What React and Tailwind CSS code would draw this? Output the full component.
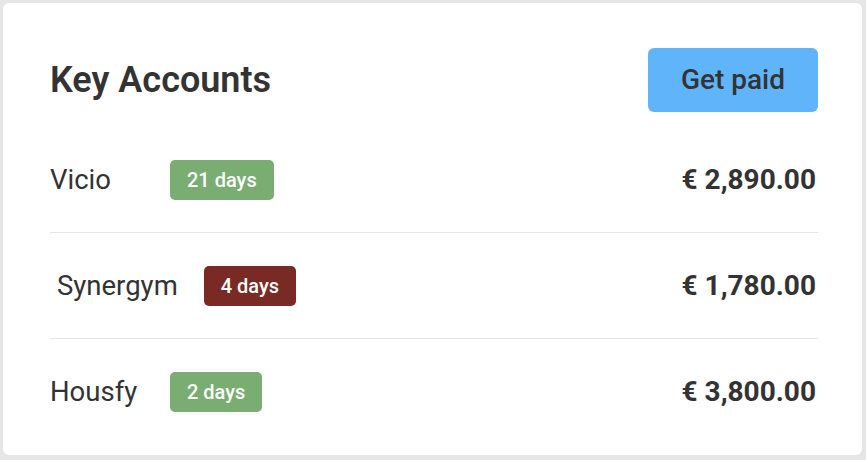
import React from "react";

const accounts = [
  { name: "Vicio", days: "21 days", late: false, amount: "€ 2,890.00" },
  { name: "Synergym", days: "4 days", late: true, amount: "€ 1,780.00", indent: true },
  { name: "Housfy", days: "2 days", late: false, amount: "€ 3,800.00" },
];

const App = () => {
  return (
    <div
      className="w-[866px] h-[460px] bg-[#e6e6e6] pt-[3px] pl-[3px]"
      style={{ fontFamily: "Roboto, 'Noto Sans', sans-serif" }}
    >
      <div className="w-[859px] h-[452px] bg-white rounded-[6px] pl-[47px] pr-[44px] pt-[45px] text-[#333333]">
        {/* Header */}
        <div className="flex items-center justify-between h-[64px]">
          <h1 className="text-[36px] font-semibold leading-none">Key Accounts</h1>
          <button
            type="button"
            className="w-[170px] h-[64px] rounded-[6px] bg-[#60b4fa] text-[28px] font-medium text-[#333333]"
          >
            Get paid
          </button>
        </div>

        {/* Rows */}
        <div className="mt-[15px]">
          {accounts.map((a, i) => (
            <div
              key={a.name}
              className={`flex items-center justify-between h-[106px] pr-[2px] ${
                i < accounts.length - 1 ? "border-b border-[#e6e6e6]" : ""
              }`}
            >
              <div className="flex items-center">
                <span
                  className={`min-w-[94px] text-[27.5px] leading-none ${
                    a.indent ? "pl-[7px]" : ""
                  }`}
                >
                  {a.name}
                </span>
                <span
                  className={`ml-[26px] h-[40px] flex items-center rounded-[5px] px-[17px] text-[20px] font-medium text-white ${
                    a.late ? "bg-[#792a24]" : "bg-[#79ad72]"
                  }`}
                >
                  {a.days}
                </span>
              </div>
              <span className="text-[28px] font-bold">{a.amount}</span>
            </div>
          ))}
        </div>
      </div>
    </div>
  );
};

export default App;
